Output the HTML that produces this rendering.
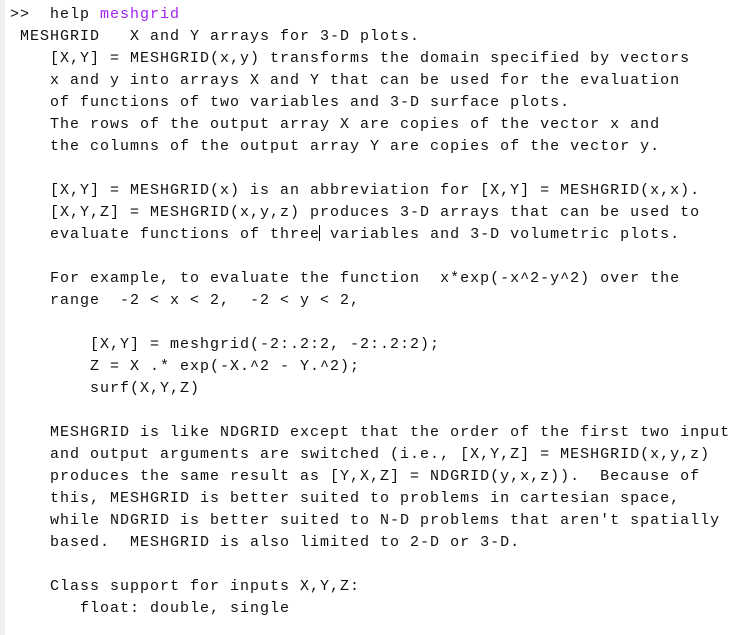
<!DOCTYPE html>
<html><head><meta charset="utf-8"><style>
html,body{margin:0;padding:0;background:#fff;width:741px;height:635px;overflow:hidden}
.g{position:absolute;left:0;top:0;width:5px;height:635px;background:#f0f0f0}
pre{position:absolute;left:10px;top:4px;margin:0;font-family:"Liberation Mono",monospace;font-size:15px;letter-spacing:1px;line-height:22px;color:#111}
.p{color:#a020f0}
.c{display:inline-block;width:1px;height:16px;background:#000;vertical-align:-3px;margin-left:-1px}
</style></head><body><div class="g"></div><pre>&gt;&gt;  help <span class="p">meshgrid</span>
 MESHGRID   X and Y arrays for 3-D plots.
    [X,Y] = MESHGRID(x,y) transforms the domain specified by vectors
    x and y into arrays X and Y that can be used for the evaluation
    of functions of two variables and 3-D surface plots.
    The rows of the output array X are copies of the vector x and
    the columns of the output array Y are copies of the vector y.

    [X,Y] = MESHGRID(x) is an abbreviation for [X,Y] = MESHGRID(x,x).
    [X,Y,Z] = MESHGRID(x,y,z) produces 3-D arrays that can be used to
    evaluate functions of three<span class="c"></span> variables and 3-D volumetric plots.

    For example, to evaluate the function  x*exp(-x^2-y^2) over the
    range  -2 &lt; x &lt; 2,  -2 &lt; y &lt; 2,

        [X,Y] = meshgrid(-2:.2:2, -2:.2:2);
        Z = X .* exp(-X.^2 - Y.^2);
        surf(X,Y,Z)

    MESHGRID is like NDGRID except that the order of the first two input
    and output arguments are switched (i.e., [X,Y,Z] = MESHGRID(x,y,z)
    produces the same result as [Y,X,Z] = NDGRID(y,x,z)).  Because of
    this, MESHGRID is better suited to problems in cartesian space,
    while NDGRID is better suited to N-D problems that aren't spatially
    based.  MESHGRID is also limited to 2-D or 3-D.

    Class support for inputs X,Y,Z:
       float: double, single
</pre></body></html>
